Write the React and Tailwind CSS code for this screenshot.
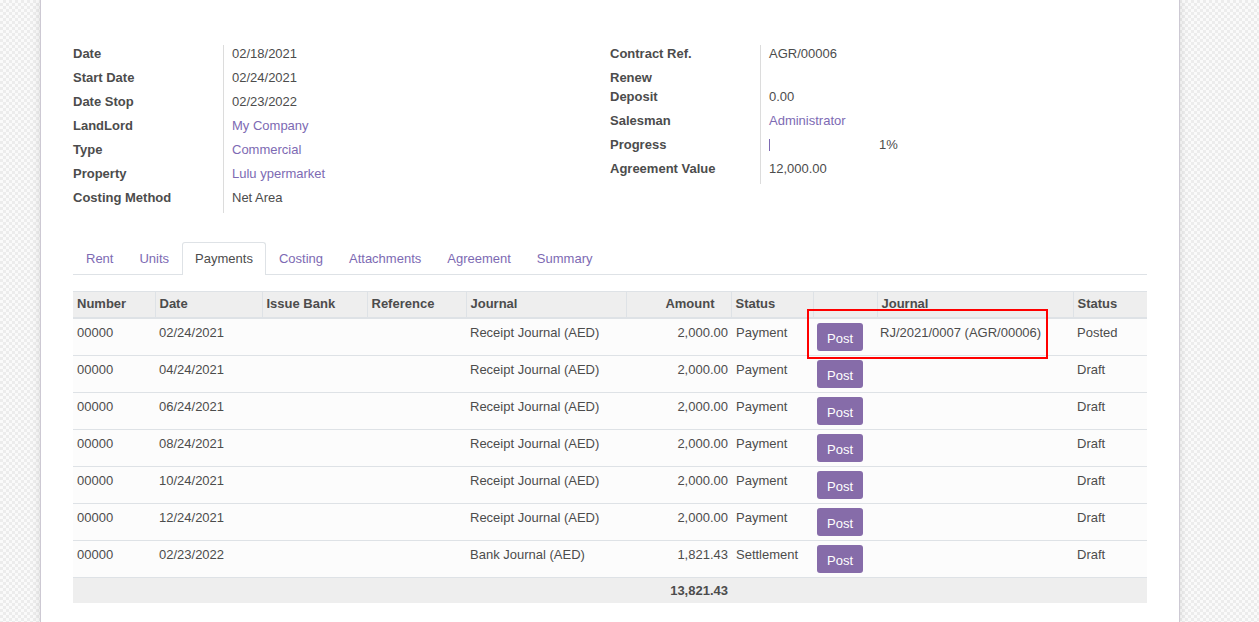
const leftFields = [
  { label: 'Date', value: '02/18/2021' },
  { label: 'Start Date', value: '02/24/2021' },
  { label: 'Date Stop', value: '02/23/2022' },
  { label: 'LandLord', value: 'My Company', link: true },
  { label: 'Type', value: 'Commercial', link: true },
  { label: 'Property', value: 'Lulu ypermarket', link: true },
  { label: 'Costing Method', value: 'Net Area' },
];

const tabs = ['Rent', 'Units', 'Payments', 'Costing', 'Attachments', 'Agreement', 'Summary'];

const columns = [
  { name: 'Number', w: 'w-[82px]' },
  { name: 'Date', w: 'w-[107px]' },
  { name: 'Issue Bank', w: 'w-[105px]' },
  { name: 'Reference', w: 'w-[99px]' },
  { name: 'Journal', w: 'w-[160px]' },
  { name: 'Amount', w: 'w-[105px]', right: true },
  { name: 'Status', w: 'w-[82px]' },
  { name: '', w: 'w-[64px]' },
  { name: 'Journal', w: 'w-[196px]' },
  { name: 'Status', w: 'w-[74px]' },
];

const payments = [
  { date: '02/24/2021', journal: 'Receipt Journal (AED)', amount: '2,000.00', type: 'Payment', move: 'RJ/2021/0007 (AGR/00006)', status: 'Posted' },
  { date: '04/24/2021', journal: 'Receipt Journal (AED)', amount: '2,000.00', type: 'Payment', move: '', status: 'Draft' },
  { date: '06/24/2021', journal: 'Receipt Journal (AED)', amount: '2,000.00', type: 'Payment', move: '', status: 'Draft' },
  { date: '08/24/2021', journal: 'Receipt Journal (AED)', amount: '2,000.00', type: 'Payment', move: '', status: 'Draft' },
  { date: '10/24/2021', journal: 'Receipt Journal (AED)', amount: '2,000.00', type: 'Payment', move: '', status: 'Draft' },
  { date: '12/24/2021', journal: 'Receipt Journal (AED)', amount: '2,000.00', type: 'Payment', move: '', status: 'Draft' },
  { date: '02/23/2022', journal: 'Bank Journal (AED)', amount: '1,821.43', type: 'Settlement', move: '', status: 'Draft' },
];

function FieldRow({ label, children, h = 'h-[24px]' }) {
  return (
    <div className={`flex ${h}`}>
      <div className="w-[150px] shrink-0 font-bold leading-[18px]">{label}</div>
      <div className="border-l border-[#dcdcdc] pl-[8px] leading-[18px] flex-1">{children}</div>
    </div>
  );
}

export default function App() {
  return (
    <div
      className="relative min-h-[622px] bg-[#f3f3f3] bg-[conic-gradient(#ececec_25%,#fafafa_0_50%,#ececec_0_75%,#fafafa_0)] bg-[length:6px_6px] text-[13px] text-[#4c4c4c]"
      style={{ fontFamily: '"Liberation Sans", Arial, sans-serif' }}
    >
      <div className="ml-[40px] w-[1140px] min-h-[622px] bg-white border-x border-[#cdc9d3] shadow-[0_0_8px_rgba(0,0,0,0.12)] px-[32px] pt-[45px] pb-[20px]">
        {/* header fields */}
        <div className="grid grid-cols-2">
          <div>
            {leftFields.map((f) => (
              <FieldRow key={f.label} label={f.label}>
                <span className={f.link ? 'text-[#7d6ab3]' : ''}>{f.value}</span>
              </FieldRow>
            ))}
          </div>
          <div>
            <FieldRow label="Contract Ref.">AGR/00006</FieldRow>
            <FieldRow label="Renew" h="h-[19px]"></FieldRow>
            <FieldRow label="Deposit">0.00</FieldRow>
            <FieldRow label="Salesman">
              <span className="text-[#7d6ab3]">Administrator</span>
            </FieldRow>
            <FieldRow label="Progress">
              <div className="flex items-center h-[18px]">
                <div className="w-[100px] h-[12px] flex">
                  <div className="w-[1px] h-full bg-[#7d6ab3]"></div>
                </div>
                <span className="ml-[10px]">1%</span>
              </div>
            </FieldRow>
            <FieldRow label="Agreement Value">12,000.00</FieldRow>
          </div>
        </div>

        {/* notebook tabs */}
        <div className="mt-[29px] flex border-b border-[#dee2e6] h-[33px]">
          {tabs.map((t) =>
            t === 'Payments' ? (
              <div key={t} className="px-[12px] h-[33px] leading-[32px] bg-white border border-b-0 border-[#dee2e6] rounded-t-[3px] -mb-px">
                {t}
              </div>
            ) : (
              <div key={t} className="px-[12px] leading-[32px] text-[#7d6ab3] border border-transparent">
                {t}
              </div>
            )
          )}
        </div>

        {/* payments table */}
        <table className="mt-[16px] w-full table-fixed border-collapse">
          <thead>
            <tr className="bg-[#eeeeee] border-t border-[#dee2e6] border-b-2 border-b-[#dee2e6]">
              {columns.map((c, i) => (
                <th
                  key={i}
                  className={`${c.w} h-[26px] px-[4px] font-bold leading-[18px] ${c.right ? 'text-right pr-[16px]' : 'text-left'} ${i > 0 ? 'border-l border-[#dee2e6]' : ''}`}
                >
                  {c.name}
                </th>
              ))}
            </tr>
          </thead>
          <tbody>
            {payments.map((p, i) => (
              <tr key={i} className="bg-[#fcfcfc] border-b border-[#dee2e6] align-top">
                <td className="px-[4px] py-[4px] leading-[20px]">00000</td>
                <td className="px-[4px] py-[4px] leading-[20px]">{p.date}</td>
                <td className="px-[4px] py-[4px]"></td>
                <td className="px-[4px] py-[4px]"></td>
                <td className="px-[4px] py-[4px] leading-[20px]">{p.journal}</td>
                <td className="pl-[4px] pr-[3px] py-[4px] leading-[20px] text-right">{p.amount}</td>
                <td className="pl-[5px] pr-[2px] py-[4px] leading-[20px] whitespace-nowrap">{p.type}</td>
                <td className="px-[4px] py-[4px]">
                  <button className="h-[28px] w-[46px] rounded-[3px] bg-[#866ca9] text-white leading-[28px] pt-[2px]">
                    Post
                  </button>
                </td>
                <td className="px-[3px] py-[4px] leading-[20px] whitespace-nowrap">{p.move}</td>
                <td className="px-[4px] py-[4px] leading-[20px]">{p.status}</td>
              </tr>
            ))}
          </tbody>
          <tfoot>
            <tr className="bg-[#eeeeee]">
              <td colSpan={5} className="h-[25px]"></td>
              <td className="pr-[3px] text-right font-bold leading-[25px]">13,821.43</td>
              <td colSpan={4}></td>
            </tr>
          </tfoot>
        </table>
      </div>

      {/* highlight annotation */}
      <div className="absolute left-[807px] top-[309px] w-[241px] h-[50px] border-2 border-[#ff0000] pointer-events-none"></div>
    </div>
  );
}
